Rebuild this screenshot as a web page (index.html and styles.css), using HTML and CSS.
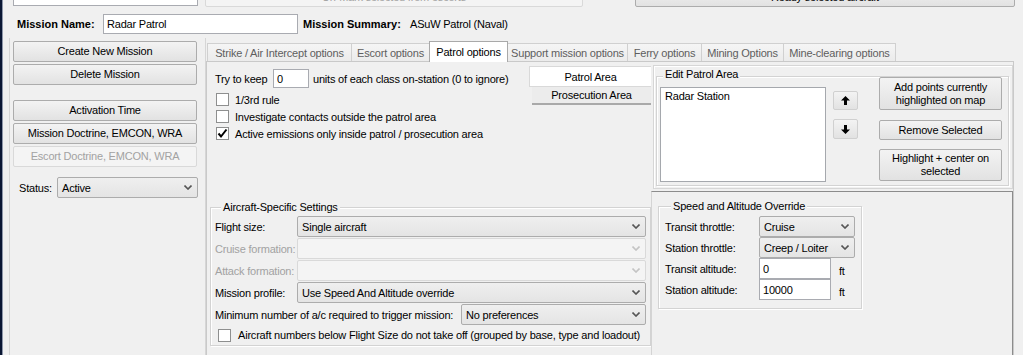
FILE: index.html
```html
<!DOCTYPE html>
<html lang="en">
<head>
  <meta charset="UTF-8">
  <title>Mission Editor</title>
  <link rel="stylesheet" href="styles.css">
</head>
<body>
  <div class="screen">
    <div class="map-edge"></div>
    <div class="window">
      <!-- controls cut off at the top of the view -->
      <div class="top-row">
        <div class="field top-field"></div>
        <button class="btn disabled unmark">Un-Mark selected from escorts</button>
        <button class="btn ready">Ready selected aircraft</button>
      </div>

      <div class="name-row">
        <span class="bold name-label">Mission Name:</span>
        <div class="field name-field">Radar Patrol</div>
        <span class="bold summary-label">Mission Summary:</span>
        <span>ASuW Patrol (Naval)</span>
      </div>

      <div class="main">
        <!-- mission list side -->
        <div class="side">
          <button class="btn side-btn">Create New Mission</button>
          <button class="btn side-btn gap-small">Delete Mission</button>
          <button class="btn side-btn gap-big">Activation Time</button>
          <button class="btn side-btn gap-small">Mission Doctrine, EMCON, WRA</button>
          <button class="btn side-btn gap-small disabled">Escort Doctrine, EMCON, WRA</button>
          <div class="status-row">
            <span class="status-label">Status:</span>
            <div class="combo status-combo">
              <span class="combo-text">Active</span>
              <svg class="chev" width="8" height="5" viewBox="0 0 8 5"><polyline points="0.5,0.5 4,4 7.5,0.5" fill="none" stroke="#555" stroke-width="1.6"/></svg>
            </div>
          </div>
        </div>

        <!-- options tabs -->
        <div class="tabs">
          <div class="tab-strip">
            <div class="tab tab-strike">Strike / Air Intercept options</div>
            <div class="tab tab-escort">Escort options</div>
            <div class="tab tab-patrol active">Patrol options</div>
            <div class="tab tab-support">Support mission options</div>
            <div class="tab tab-ferry">Ferry options</div>
            <div class="tab tab-mining">Mining Options</div>
            <div class="tab tab-clearing">Mine-clearing options</div>
          </div>

          <div class="tab-page">
            <div class="cell-options">
              <div class="options">
                <div class="keep-row">
                  <span class="keep-label">Try to keep</span>
                  <input class="field keep-field" type="text" value="0">
                  <span class="keep-text">units of each class on-station (0 to ignore)</span>
                </div>
                <div class="check-row first">
                  <span class="check"></span>
                  <span>1/3rd rule</span>
                </div>
                <div class="check-row">
                  <span class="check"></span>
                  <span>Investigate contacts outside the patrol area</span>
                </div>
                <div class="check-row">
                  <span class="check">
                    <svg width="11" height="11" viewBox="0 0 11 11"><polyline points="1.5,5.5 4,8.5 9.5,1.5" fill="none" stroke="#000" stroke-width="2"/></svg>
                  </span>
                  <span>Active emissions only inside patrol / prosecution area</span>
                </div>
              </div>
              <div class="vtabs">
                <div class="vtab active">Patrol Area</div>
                <div class="vtab">Prosecution Area</div>
              </div>
            </div>

            <div class="cell-area">
              <div class="area-frame">
                <div class="group area-group">
                  <span class="group-title">Edit Patrol Area</span>
                  <div class="area-body">
                    <div class="listbox">
                      <div class="list-item">Radar Station</div>
                    </div>
                    <div class="arrows">
                      <button class="btn arrow-btn up">
                        <svg width="9" height="9" viewBox="0 0 9 9"><polygon points="4.5,0 9,4.5 6,4.5 6,9 3,9 3,4.5 0,4.5" fill="#000"/></svg>
                      </button>
                      <button class="btn arrow-btn down">
                        <svg width="9" height="9" viewBox="0 0 9 9"><polygon points="4.5,9 9,4.5 6,4.5 6,0 3,0 3,4.5 0,4.5" fill="#000"/></svg>
                      </button>
                    </div>
                    <div class="area-actions">
                      <button class="btn action-btn tall">Add points currently<br>highlighted on map</button>
                      <button class="btn action-btn remove">Remove Selected</button>
                      <button class="btn action-btn tall highlight">Highlight + center on<br>selected</button>
                    </div>
                  </div>
                </div>
              </div>
            </div>

            <div class="cell-aircraft">
              <div class="group aircraft-group">
                <span class="group-title">Aircraft-Specific Settings</span>
                <div class="form-row first">
                  <span class="row-label">Flight size:</span>
                  <div class="combo wide-combo">
                    <span class="combo-text">Single aircraft</span>
                    <svg class="chev" width="8" height="5" viewBox="0 0 8 5"><polyline points="0.5,0.5 4,4 7.5,0.5" fill="none" stroke="#555" stroke-width="1.6"/></svg>
                  </div>
                </div>
                <div class="form-row">
                  <span class="row-label muted">Cruise formation:</span>
                  <div class="combo wide-combo off">
                    <span class="combo-text"></span>
                    <svg class="chev" width="8" height="5" viewBox="0 0 8 5"><polyline points="0.5,0.5 4,4 7.5,0.5" fill="none" stroke="#c4c4c4" stroke-width="1.6"/></svg>
                  </div>
                </div>
                <div class="form-row">
                  <span class="row-label muted">Attack formation:</span>
                  <div class="combo wide-combo off">
                    <span class="combo-text"></span>
                    <svg class="chev" width="8" height="5" viewBox="0 0 8 5"><polyline points="0.5,0.5 4,4 7.5,0.5" fill="none" stroke="#c4c4c4" stroke-width="1.6"/></svg>
                  </div>
                </div>
                <div class="form-row">
                  <span class="row-label">Mission profile:</span>
                  <div class="combo wide-combo">
                    <span class="combo-text">Use Speed And Altitude override</span>
                    <svg class="chev" width="8" height="5" viewBox="0 0 8 5"><polyline points="0.5,0.5 4,4 7.5,0.5" fill="none" stroke="#555" stroke-width="1.6"/></svg>
                  </div>
                </div>
                <div class="form-row">
                  <span class="min-label">Minimum number of a/c required to trigger mission:</span>
                  <div class="combo min-combo">
                    <span class="combo-text">No preferences</span>
                    <svg class="chev" width="8" height="5" viewBox="0 0 8 5"><polyline points="0.5,0.5 4,4 7.5,0.5" fill="none" stroke="#555" stroke-width="1.6"/></svg>
                  </div>
                </div>
                <div class="check-row takeoff">
                  <span class="check"></span>
                  <span>Aircraft numbers below Flight Size do not take off (grouped by base, type and loadout)</span>
                </div>
              </div>
            </div>

            <div class="cell-speed">
              <div class="group speed-group">
                <span class="group-title">Speed and Altitude Override</span>
                <div class="speed-row first">
                  <span class="speed-label">Transit throttle:</span>
                  <div class="combo speed-combo">
                    <span class="combo-text">Cruise</span>
                    <svg class="chev" width="8" height="5" viewBox="0 0 8 5"><polyline points="0.5,0.5 4,4 7.5,0.5" fill="none" stroke="#555" stroke-width="1.6"/></svg>
                  </div>
                </div>
                <div class="speed-row">
                  <span class="speed-label">Station throttle:</span>
                  <div class="combo speed-combo">
                    <span class="combo-text">Creep / Loiter</span>
                    <svg class="chev" width="8" height="5" viewBox="0 0 8 5"><polyline points="0.5,0.5 4,4 7.5,0.5" fill="none" stroke="#555" stroke-width="1.6"/></svg>
                  </div>
                </div>
                <div class="speed-row">
                  <span class="speed-label">Transit altitude:</span>
                  <input class="field alt-field" type="text" value="0">
                  <span class="unit">ft</span>
                </div>
                <div class="speed-row">
                  <span class="speed-label">Station altitude:</span>
                  <input class="field alt-field" type="text" value="10000">
                  <span class="unit">ft</span>
                </div>
              </div>
            </div>
          </div>
        </div>
      </div>
    </div>
  </div>
</body>
</html>
```

FILE: styles.css
```css
* {
  box-sizing: border-box;
}
body {
  margin: 0;
  background: #f0f0f0;
  font: 11px "Liberation Sans", Arial, sans-serif;
  letter-spacing: -0.2px;
  color: #000;
  overflow: hidden;
}
.screen {
  display: flex;
  width: 1023px;
  height: 355px;
  overflow: hidden;
}
.map-edge {
  width: 3px;
  flex: none;
  background: linear-gradient(to right, #0b1734 2px, #8e97aa 2px);
}
.window {
  flex: 1;
}
.bold {
  font-weight: bold;
  letter-spacing: 0;
}

/* basic controls */
.btn {
  display: flex;
  align-items: center;
  justify-content: center;
  height: 21px;
  padding: 0;
  border: 1px solid #acacac;
  border-radius: 2px;
  background: linear-gradient(#f3f3f3, #e2e2e2);
  font: inherit;
  letter-spacing: inherit;
  color: #000;
  text-align: center;
  line-height: 13px;
}
.btn.disabled {
  color: #a2a2a2;
  border-color: #d9d9d9;
  background: #f4f4f4;
}
.field {
  display: flex;
  align-items: center;
  height: 20px;
  padding: 0 3px;
  border: 1px solid #a9abb1;
  background: #fff;
  font: inherit;
  letter-spacing: inherit;
  color: #000;
  outline: none;
}
.combo {
  display: flex;
  align-items: center;
  height: 21px;
  padding-left: 4px;
  border: 1px solid #acacac;
  border-radius: 2px;
  background: linear-gradient(#efefef, #e4e4e4);
}
.combo.off {
  border-color: #d9d9d9;
  background: #f4f4f4;
}
.combo-text {
  flex: 1;
  white-space: nowrap;
}
.chev {
  margin-right: 5px;
}
.check {
  display: flex;
  align-items: center;
  justify-content: center;
  width: 13px;
  height: 13px;
  border: 1px solid #8e8f8f;
  background: #fff;
  flex: none;
}
.group {
  display: flex;
  flex-direction: column;
  border: 1px solid #d3d3d3;
  box-shadow: inset 1px 1px #fff, 1px 1px #fff;
}
.group-title {
  align-self: flex-start;
  margin: -7px 0 0 6px;
  padding: 0 2px;
  line-height: 13px;
  background: #f0f0f0;
}

/* top rows */
.top-row {
  display: flex;
  align-items: flex-start;
  height: 20px;
  margin-top: -13px;
}
.top-field {
  width: 185px;
  height: 19px;
  margin-left: 10px;
}
.unmark {
  width: 378px;
  height: 20px;
  margin-left: 7px;
}
.ready {
  width: 380px;
  height: 20px;
  margin-left: 52px;
}
.name-row {
  display: flex;
  align-items: center;
  height: 20px;
  margin-top: 7px;
}
.name-label {
  width: 86px;
  margin-left: 14px;
}
.name-field {
  width: 195px;
}
.summary-label {
  width: 107px;
  margin-left: 5px;
}

/* main area */
.main {
  display: flex;
  margin-top: 4px;
  height: 330px;
}
.side {
  width: 197px;
  margin-left: 6px;
  padding: 3px 0 0 3px;
  border-left: 1px solid #d6d6d6;
  border-right: 1px solid #d6d6d6;
}
.side-btn {
  width: 184px;
}
.gap-small {
  margin-top: 2px;
}
.gap-big {
  margin-top: 15px;
}
.status-row {
  display: flex;
  align-items: center;
  margin-top: 10px;
}
.status-label {
  width: 44px;
  padding-left: 6px;
}
.status-combo {
  width: 141px;
}

.tabs {
  width: 808px;
}
.tab-strip {
  display: flex;
  align-items: flex-end;
  height: 23px;
  padding-left: 1px;
}
.tab {
  display: flex;
  align-items: center;
  justify-content: center;
  height: 18px;
  margin-right: -1px;
  border: 1px solid #d0d0d0;
  border-bottom: none;
  background: linear-gradient(#f5f5f5, #ebebeb);
  color: #5e5e5e;
  white-space: nowrap;
}
.tab.active {
  position: relative;
  z-index: 1;
  height: 21px;
  margin-bottom: -1px;
  border-color: #a9a9a9;
  background: #fff;
  color: #000;
}
.tab-strike { width: 145px; }
.tab-escort { width: 79px; }
.tab-patrol { width: 79px; }
.tab-support { width: 121px; }
.tab-ferry { width: 75px; }
.tab-mining { width: 83px; }
.tab-clearing { width: 113px; }

.tab-page {
  display: grid;
  grid-template-columns: 444px 362px;
  grid-template-rows: 129px 1fr;
  height: 310px;
  border: 1px solid #c9c9c9;
}

/* patrol options, top left */
.cell-options {
  display: flex;
}
.options {
  flex: 1;
  padding: 7px 0 0 8px;
}
.keep-row {
  display: flex;
  align-items: center;
  height: 19px;
}
.keep-label {
  width: 58px;
}
.keep-field {
  width: 36px;
  height: 19px;
}
.keep-text {
  margin-left: 4px;
}
.check-row {
  display: flex;
  align-items: center;
  gap: 6px;
  height: 17px;
  padding-left: 1px;
  white-space: nowrap;
}
.check-row.first {
  margin-top: 3px;
}
.vtabs {
  width: 122px;
  margin-top: 4px;
}
.vtab {
  display: flex;
  align-items: center;
  justify-content: center;
  height: 18px;
  margin-left: 3px;
  border-bottom: 2px solid #a9a9a9;
  background: #ececec;
}
.vtab.active {
  height: 21px;
  margin-left: 0;
  border: 1px solid #d9d9d9;
  border-right: none;
  background: #fff;
}

/* patrol area editor, top right */
.area-frame {
  height: 124px;
  margin: 3px 0 0 2px;
  padding: 10px 3px 0 2px;
  border: 1px solid #d6d6d6;
  box-shadow: inset 1px 1px #fff;
}
.area-group {
  height: 110px;
}
.area-group .group-title {
  margin-top: -9px;
}
.area-body {
  display: flex;
  align-items: flex-start;
}
.listbox {
  width: 166px;
  height: 95px;
  margin: 6px 0 0 3px;
  padding: 2px 4px;
  border: 1px solid #a5a8ad;
  background: #fff;
}
.list-item {
  line-height: 13px;
}
.arrows {
  display: flex;
  flex-direction: column;
  gap: 9px;
  margin: 10px 0 0 7px;
}
.arrow-btn {
  width: 25px;
  height: 19px;
  border-color: #d0d0d0;
}
.arrow-btn.down {
  height: 20px;
}
.area-actions {
  display: flex;
  flex-direction: column;
  margin: -4px 0 0 21px;
}
.action-btn {
  width: 123px;
  height: 20px;
}
.action-btn.tall {
  height: 33px;
}
.action-btn.remove {
  margin-top: 10px;
}
.action-btn.highlight {
  height: 32px;
  margin-top: 9px;
}

/* aircraft settings, bottom left */
.aircraft-group {
  height: 139px;
  margin: 16px 0 0 3px;
  width: 441px;
  padding-left: 4px;
}
.form-row {
  display: flex;
  align-items: center;
  height: 21px;
  margin-top: 1px;
}
.form-row.first {
  margin-top: 2px;
}
.row-label {
  width: 82px;
  white-space: nowrap;
}
.muted {
  color: #a2a2a2;
}
.wide-combo {
  width: 349px;
}
.min-label {
  width: 246px;
  white-space: nowrap;
}
.min-combo {
  width: 185px;
}
.takeoff {
  gap: 7px;
  height: 18px;
  margin-top: 1px;
  padding-left: 3px;
}

/* speed override, bottom right */
.cell-speed {
  border-top: 1px solid #8c8c8c;
  border-right: 1px solid #8c8c8c;
  border-left: 1px solid #d4d4d4;
  padding: 14px 0 0 6px;
}
.speed-group {
  width: 204px;
  height: 103px;
  padding-left: 6px;
}
.speed-row {
  display: flex;
  align-items: center;
  height: 21px;
}
.speed-row.first {
  margin-top: 3px;
}
.speed-label {
  width: 94px;
  white-space: nowrap;
}
.speed-combo {
  width: 96px;
}
.alt-field {
  width: 72px;
  height: 21px;
}
.unit {
  margin: 4px 0 0 8px;
}
```
